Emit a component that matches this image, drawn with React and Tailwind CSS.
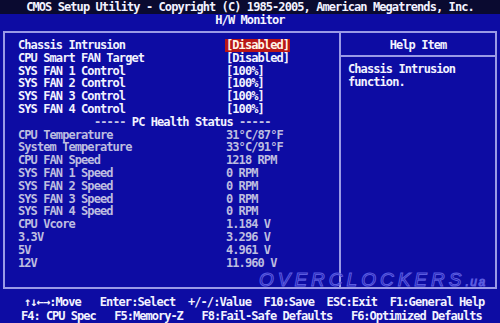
import React from "react";

const top = [
  ["Chassis Intrusion", "[Disabled]", true],
  ["CPU Smart FAN Target", "[Disabled]"],
  ["SYS FAN 1 Control", "[100%]"],
  ["SYS FAN 2 Control", "[100%]"],
  ["SYS FAN 3 Control", "[100%]"],
  ["SYS FAN 4 Control", "[100%]"],
];

const health = [
  ["CPU Temperature", "31°C/87°F"],
  ["System Temperature", "33°C/91°F"],
  ["CPU FAN Speed", "1218 RPM"],
  ["SYS FAN 1 Speed", "0 RPM"],
  ["SYS FAN 2 Speed", "0 RPM"],
  ["SYS FAN 3 Speed", "0 RPM"],
  ["SYS FAN 4 Speed", "0 RPM"],
  ["CPU Vcore", "1.184 V"],
  ["3.3V", "3.296 V"],
  ["5V", "4.961 V"],
  ["12V", "11.960 V"],
];

export default function App() {
  return (
    <div
      className="relative w-[500px] h-[323px] overflow-hidden bg-[#0d0ca3] text-[#f2f2ff] font-bold text-[12px] tracking-[-0.92px] flex flex-col"
      style={{ fontFamily: '"DejaVu Sans Mono", monospace' }}
    >
      <div className="h-[14px] leading-[14px] bg-[#0a0a30] text-center whitespace-pre">
        CMOS Setup Utility - Copyright (C) 1985-2005, American Megatrends, Inc.
      </div>
      <div className="h-[13px] leading-[13px] text-center">H/W Monitor</div>
      <div className="px-[3px] mt-[4px]">
        <div className="h-[258px] border-2 border-[#9a9ae6] flex">
          <div className="w-[336px] border-r-2 border-[#9a9ae6] pl-[13px] pt-[6px] leading-[12.8px]">
            {top.map(([l, v, hi]) => (
              <div key={l} className="flex h-[12.8px]">
                <span className="w-[208px] whitespace-pre">{l}</span>
                <span className={hi ? "bg-[#b81616] text-[#fff4e8] -ml-[1px] px-[1px]" : ""}>{v}</span>
              </div>
            ))}
            <div className="h-[12.8px] pl-[76px] whitespace-pre">
              <span className="text-[#c4c4e6]">-----</span> PC Health Status <span className="text-[#c4c4e6]">-----</span>
            </div>
            {health.map(([l, v]) => (
              <div key={l} className="flex h-[12.8px] text-[#bdbde0]">
                <span className="w-[208px] whitespace-pre">{l}</span>
                <span className="whitespace-pre">{v}</span>
              </div>
            ))}
          </div>
          <div className="flex-1 flex flex-col">
            <div className="h-[24px] leading-[25px] text-center border-b-2 border-[#9a9ae6]">Help Item</div>
            <div className="pl-[7px] pt-[6px] leading-[12.8px]">
              <div>Chassis Intrusion</div>
              <div>function.</div>
            </div>
          </div>
        </div>
      </div>
      <div className="mt-[7px] leading-[13.5px] whitespace-pre">
        <div className="pl-[24px]">↑↓←→:Move   Enter:Select  +/-/:Value  F10:Save  ESC:Exit  F1:General Help</div>
        <div className="pl-[21px] tracking-[-1px]">F4: CPU Spec   F5:Memory-Z   F8:Fail-Safe Defaults   F6:Optimized Defaults</div>
      </div>
      <div
        className="absolute left-[259px] top-[266px] text-[19px] italic font-normal tracking-[4px] text-transparent [-webkit-text-stroke:1px_#5c5ce0] whitespace-pre"
        style={{ fontFamily: '"Liberation Sans", sans-serif' }}
      >
        OVERCLOCKERS<span className="text-[12px] tracking-[1.5px]">.ua</span>
      </div>
    </div>
  );
}
